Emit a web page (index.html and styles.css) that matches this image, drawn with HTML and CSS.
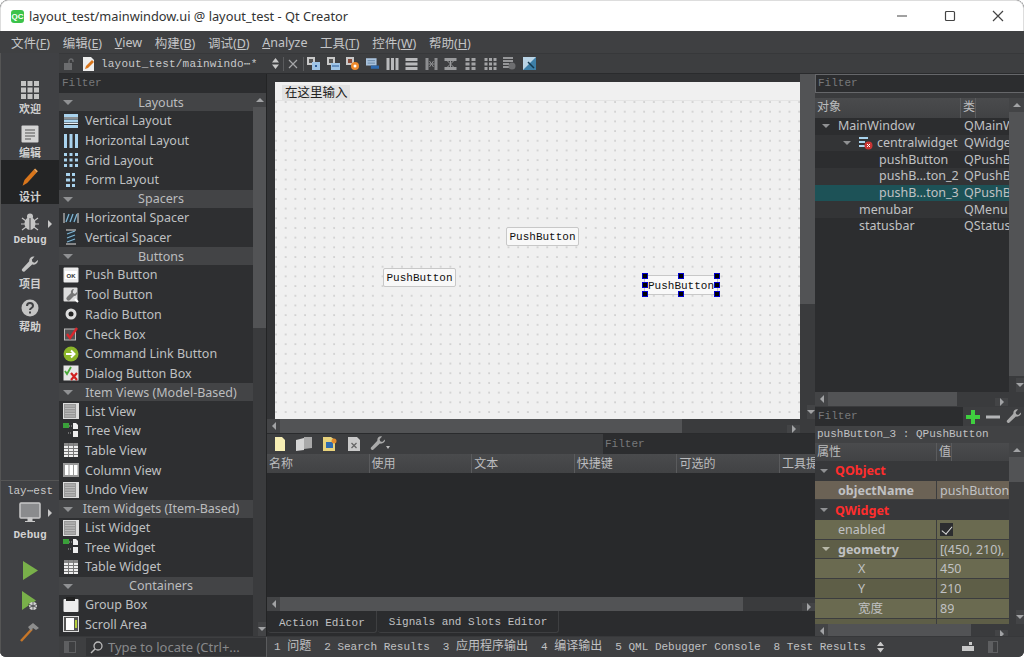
FILE: index.html
```html
<!DOCTYPE html>
<html lang="zh">
<head>
  <meta charset="UTF-8" />
  <title>layout_test/mainwindow.ui @ layout_test - Qt Creator</title>
  <link rel="stylesheet" href="styles.css">
</head>
<body>

  <!-- shared icons -->
  <svg class="defs" width="0" height="0">
    <symbol id="i-vlayout" viewBox="0 0 16 16"><rect x="1" y="1" width="14" height="3" fill="#a9d3ee"/><rect x="1" y="6.500" width="14" height="3" fill="#a9d3ee"/><rect x="1" y="12" width="14" height="3" fill="#a9d3ee"/><path d="M1 5h14M1 10.500h14" stroke="#e8f0f5"/></symbol>
    <symbol id="i-hlayout" viewBox="0 0 16 16"><rect x="1" y="1" width="3" height="14" fill="#a9d3ee"/><rect x="6.500" y="1" width="3" height="14" fill="#a9d3ee"/><rect x="12" y="1" width="3" height="14" fill="#a9d3ee"/></symbol>
    <symbol id="i-grid" viewBox="0 0 16 16"><path d="M1 1h3v3H1zM6.500 1h3v3h-3zM12 1h3v3h-3zM1 6.500h3v3H1zM6.500 6.500h3v3h-3zM12 6.500h3v3h-3zM1 12h3v3H1zM6.500 12h3v3h-3zM12 12h3v3h-3z" fill="#a9d3ee"/></symbol>
    <symbol id="i-form" viewBox="0 0 16 16"><path d="M3 1h4v3H3zM9 1h3v3H9zM3 6.500h4v3H3zM9 6.500h3v3H9zM3 12h4v3H3zM9 12h3v3H9z" fill="#a9d3ee"/></symbol>
    <symbol id="i-hspacer" viewBox="0 0 16 16"><path d="M1 3v10M15 3v10" stroke="#ddd"/><rect x="2" y="4" width="12" height="8" fill="#26323a"/><path d="M3 12l3-8M7 12l3-8M11 12l3-8" stroke="#7fb2d0" stroke-width="1.300"/></symbol>
    <symbol id="i-vspacer" viewBox="0 0 16 16"><path d="M3 1h10M3 15h10" stroke="#ddd"/><rect x="4" y="2" width="8" height="12" fill="#26323a"/><path d="M4 5l8-3M4 9l8-3M4 13l8-3" stroke="#7fb2d0" stroke-width="1.300"/></symbol>
    <symbol id="i-push" viewBox="0 0 16 16"><rect x=".5" y=".5" width="15" height="15" rx="1" fill="#ececec"/><rect x="2" y="4" width="12" height="8" fill="#fff"/><text x="8" y="10.500" font-family="Liberation Sans" font-size="6" font-weight="700" text-anchor="middle" fill="#333">OK</text></symbol>
    <symbol id="i-tool" viewBox="0 0 16 16"><rect x=".5" y=".5" width="14" height="14" rx="1" fill="#ddd"/><path d="M11 2a3 3 0 0 0-3 4L4 10a2 2 0 0 0 3 3l4-4a3 3 0 0 0 3-4l-2 2-2-1V4z" fill="#777"/><path d="M12 12l3 3" stroke="#fff" stroke-width="2"/></symbol>
    <symbol id="i-radio" viewBox="0 0 16 16"><circle cx="8" cy="8" r="5.500" fill="#ddd"/><circle cx="8" cy="8" r="2.500" fill="#222"/></symbol>
    <symbol id="i-check" viewBox="0 0 16 16"><rect x="1.500" y="3" width="11" height="11" fill="#555" stroke="#bbb"/><path d="M4 8l3 4 7-10" fill="none" stroke="#d8262c" stroke-width="2.400"/></symbol>
    <symbol id="i-cmd" viewBox="0 0 16 16"><circle cx="8" cy="8" r="7.500" fill="#8bb52a"/><path d="M3 8h8M8 4.500L11.500 8 8 11.500" fill="none" stroke="#fff" stroke-width="2"/></symbol>
    <symbol id="i-dialog" viewBox="0 0 16 16"><rect x=".5" y=".5" width="15" height="15" fill="#e6e6e6"/><path d="M2 6l2 3 4-7" fill="none" stroke="#4aa83a" stroke-width="1.800"/><path d="M8 8l6 7M14 8l-6 7" stroke="#d02020" stroke-width="2.200"/></symbol>
    <symbol id="i-list" viewBox="0 0 16 16"><rect x="0" y="0" width="16" height="16" fill="#ddd"/><rect x="1" y="1" width="12" height="14" fill="#999"/><path d="M2 3h10M2 5.500h10M2 8h10M2 10.500h10M2 13h10" stroke="#bbb"/></symbol>
    <symbol id="i-tree" viewBox="0 0 16 16"><rect x="0" y="0" width="6" height="5" fill="#3aa03a"/><path d="M6 3h3M5 10h4" stroke="#aaa" stroke-dasharray="1 1"/><path d="M10 0h3l2 2v4h-5zM10 8h5v6h-5z" fill="#eee"/></symbol>
    <symbol id="i-table" viewBox="0 0 16 16"><rect x="1" y="1" width="14" height="14" fill="#eee"/><path d="M1 1h14v3H1z" fill="#888"/><path d="M1 6.500h14M1 9.500h14M1 12.500h14M5.500 1v14M10.500 1v14" stroke="#777"/></symbol>
    <symbol id="i-column" viewBox="0 0 16 16"><rect x="0" y="1" width="16" height="14" fill="#999"/><rect x="2" y="3" width="3.500" height="10" fill="#fff"/><rect x="6.500" y="3" width="3.500" height="10" fill="#fff"/><rect x="11" y="3" width="3.500" height="10" fill="#fff"/></symbol>
    <symbol id="i-groupbox" viewBox="0 0 16 16"><rect x=".5" y="2" width="15" height="13" rx="1" fill="#ececec"/><rect x="3" y="0" width="9" height="4" fill="#222"/></symbol>
    <symbol id="i-scroll" viewBox="0 0 16 16"><rect x=".5" y=".5" width="15" height="15" fill="#555" stroke="#ddd"/><rect x="3" y="2" width="8" height="12" fill="#fff"/><rect x="12" y="4" width="2" height="8" fill="#b5cf3c"/></symbol>
    <symbol id="i-wrench" viewBox="0 0 16 16"><path d="M15 3.500l-2.800 2.400-2-.6-.6-2L12 .5C9.500-.2 7 1.800 7.300 4.700L1 11.500c-1 1.200.8 3.300 2.200 2.200l6.700-6.100c3 .5 5.600-1.600 5.100-4.100z" fill="#aaa"/></symbol>
  </svg>

  <div class="window">

    <header class="titlebar">
      <span class="qc-logo">QC</span>
      <span class="title-text">layout_test/mainwindow.ui @ layout_test - Qt Creator</span>
      <div class="win-buttons">
        <svg width="14" height="14" viewBox="0 0 14 14"><path d="M2 7h10" stroke="#444" stroke-width="1.200"/></svg>
        <svg width="14" height="14" viewBox="0 0 14 14"><rect x="2.500" y="2.500" width="9" height="9" rx="1" fill="none" stroke="#444" stroke-width="1.200"/></svg>
        <svg width="14" height="14" viewBox="0 0 14 14"><path d="M2 2l10 10M12 2L2 12" stroke="#444" stroke-width="1.200"/></svg>
      </div>
    </header>

    <nav class="menubar">
      <span>文件(<u>F</u>)</span>
      <span>编辑(<u>E</u>)</span>
      <span><u>V</u>iew</span>
      <span>构建(<u>B</u>)</span>
      <span>调试(<u>D</u>)</span>
      <span><u>A</u>nalyze</span>
      <span>工具(<u>T</u>)</span>
      <span>控件(<u>W</u>)</span>
      <span>帮助(<u>H</u>)</span>
    </nav>

    <div class="main">

      <!-- Mode selector -->
      <aside class="modebar">
        <div class="mode">
          <svg width="18" height="18" viewBox="0 0 18 18"><path d="M0 0h5v5H0zM6.500 0h5v5h-5zM13 0h5v5h-5zM0 6.500h5v5H0zM6.500 6.500h5v5h-5zM13 6.500h5v5h-5zM0 13h5v5H0zM6.500 13h5v5h-5zM13 13h5v5h-5z" fill="#c4c4c4"/></svg>
          <span>欢迎</span>
        </div>
        <div class="mode">
          <svg width="18" height="18" viewBox="0 0 18 18"><rect width="17" height="17" x=".5" y=".5" rx="1" fill="#d4d4d4"/><path d="M4 5h10M4 8h10M4 11h10M4 14h6" stroke="#555" stroke-width="1.200"/></svg>
          <span>编辑</span>
        </div>
        <div class="mode active">
          <svg width="18" height="20" viewBox="0 0 18 20"><path d="M1 19l2-6L13 2l3 3L6 16z" fill="#d9761c"/><path d="M13 2l1.500-1.500 3 3L16 5z" fill="#e9a35a"/></svg>
          <span>设计</span>
        </div>
        <div class="mode">
          <div class="mode-row">
            <svg width="18" height="18" viewBox="0 0 18 18"><ellipse cx="9" cy="10.500" rx="5.500" ry="6.500" fill="#c4c4c4"/><circle cx="9" cy="3.500" r="3" fill="#c4c4c4"/><path d="M1 5l4 3M17 5l-4 3M0 11h4M18 11h-4M1 17l4-3M17 17l-4-3" stroke="#c4c4c4" stroke-width="1.200"/><path d="M9 5v12" stroke="#404144"/></svg>
            <i class="tri-r"></i>
          </div>
          <span class="mono-label">Debug</span>
        </div>
        <div class="mode">
          <svg width="18" height="18" viewBox="0 0 16 16"><path d="M15 3.500l-2.800 2.400-2-.6-.6-2L12 .5C9.500-.2 7 1.800 7.300 4.700L1 11.500c-1 1.200.8 3.300 2.200 2.200l6.700-6.100c3 .5 5.600-1.600 5.100-4.100z" fill="#c4c4c4"/></svg>
          <span>项目</span>
        </div>
        <div class="mode">
          <svg width="18" height="18" viewBox="0 0 18 18"><circle cx="9" cy="9" r="8.500" fill="#c4c4c4"/><path d="M6 7c0-4 6-4 6 0 0 2-3 2-3 4" fill="none" stroke="#404144" stroke-width="2"/><rect x="8" y="12.500" width="2" height="2" fill="#404144"/></svg>
          <span>帮助</span>
        </div>

        <div class="kit">
          <span class="kit-name">lay⋯est</span>
          <div class="mode-row">
            <svg width="22" height="22" viewBox="0 0 22 22"><rect x="1" y="1" width="20" height="15" rx="1" fill="#8a8b8d" stroke="#c8c8c8" stroke-width="1.500"/><path d="M9 16h4v3H9zM6 19.500h10" fill="#c8c8c8" stroke="#c8c8c8"/></svg>
            <i class="tri-r"></i>
          </div>
          <span class="mono-label">Debug</span>
        </div>
        <div class="run-buttons">
          <svg width="16" height="19" viewBox="0 0 16 19"><path d="M1 0l15 9.500L1 19z" fill="#79b04a"/></svg>
          <svg width="18" height="20" viewBox="0 0 18 20"><path d="M1 0l14 9.500L1 19z" fill="#79b04a"/><ellipse cx="12" cy="15" rx="4" ry="4" fill="#d4d4d4"/><path d="M12 11v8M7 13l10 4M17 13L7 17" stroke="#404144" stroke-width=".8"/></svg>
          <svg width="20" height="20" viewBox="0 0 20 20"><path d="M1 19L12 7" stroke="#c77628" stroke-width="2.500"/><path d="M8 5l5-4 6 5-3 2-3-2-2 3z" fill="#8d8d8d"/></svg>
        </div>
      </aside>

      <div class="content">

        <!-- Document toolbar -->
        <div class="doc-toolbar">
          <svg class="lock" width="12" height="12" viewBox="0 0 12 12"><rect x="1" y="5" width="8" height="7" fill="#6c6d6f"/><path d="M6 5V3a2 2 0 0 1 4 0v1" fill="none" stroke="#6c6d6f" stroke-width="1.300"/></svg>
          <svg class="doc" width="13" height="14" viewBox="0 0 13 14"><path d="M1 0h8l3 3v11H1z" fill="#eee"/><path d="M3 12l1-3 6-6 2 2-6 6z" fill="#d9761c"/></svg>
          <span class="doc-name">layout_test/mainwindo⋯*</span>
          <i class="updown"></i>
          <i class="sep"></i>
          <svg class="close" width="10" height="10" viewBox="0 0 10 10"><path d="M1 1l8 8M9 1L1 9" stroke="#a5a6a8" stroke-width="1.200"/></svg>
          <i class="sep"></i>
          <div class="form-tools">
            <svg width="13" height="13" viewBox="0 0 13 13"><rect width="8" height="8" fill="#c8c8c8"/><rect x="2" y="2" width="4" height="4" fill="#555"/><rect x="5" y="5" width="8" height="8" fill="#9fc4e6"/><rect x="8" y="8" width="2" height="2" fill="#2d5c9a"/></svg>
            <svg width="13" height="13" viewBox="0 0 13 13"><rect width="8" height="8" fill="#c8c8c8"/><rect x="2" y="2" width="4" height="4" fill="#555"/><rect x="4" y="6" width="9" height="7" fill="#9fc4e6"/><path d="M5 9h7" stroke="#2d5c9a"/></svg>
            <svg width="13" height="13" viewBox="0 0 13 13"><rect width="8" height="8" fill="#c8c8c8"/><rect x="2" y="2" width="4" height="4" fill="#8a4b3a"/><circle cx="9" cy="9" r="4" fill="#f08a2c"/><circle cx="9" cy="9" r="1.500" fill="#fff"/></svg>
            <svg width="13" height="13" viewBox="0 0 16 13"><rect width="13" height="9" fill="#a9c2dc"/><path d="M2 3h9M2 6h9" stroke="#5c7c9c"/><rect x="6" y="9" width="10" height="4" fill="#2f6bb0"/></svg>
            <svg width="13" height="12" viewBox="0 0 12 12"><path d="M0 0h3v12H0zM4.500 0h3v12h-3zM9 0h3v12H9z" fill="#b9babc"/></svg>
            <svg width="13" height="12" viewBox="0 0 12 12"><path d="M0 0h12v3H0zM0 4.500h12v3H0zM0 9h12v3H0z" fill="#b9babc"/></svg>
            <svg width="13" height="12" viewBox="0 0 12 12"><path d="M0 0h3v12H0zM9 0h3v12H9z" fill="#8d8e90"/><path d="M3 6h6M4 3l4 6M8 3l-4 6" stroke="#8d8e90"/></svg>
            <svg width="13" height="12" viewBox="0 0 12 12"><path d="M0 0h12v3H0zM0 9h12v3H0z" fill="#9a9b9d"/><path d="M6 3v6M3 3l3 3 3-3M3 9l3-3 3 3" stroke="#9a9b9d" fill="none"/></svg>
            <svg width="13" height="12" viewBox="0 0 12 12"><path d="M1 0h4v3H1zM7 0h4v3H7zM1 4.500h4v3H1zM7 4.500h4v3H7zM1 9h4v3H1zM7 9h4v3H7z" fill="#a3a4a6"/></svg>
            <svg width="13" height="12" viewBox="0 0 12 12"><path d="M0 0h3v3H0zM4.500 0h3v3h-3zM9 0h3v3H9zM0 4.500h3v3H0zM4.500 4.500h3v3h-3zM9 4.500h3v3H9zM0 9h3v3H0zM4.500 9h3v3h-3zM9 9h3v3H9z" fill="#a3a4a6"/></svg>
            <svg width="13" height="13" viewBox="0 0 13 13"><path d="M0 1h10M0 4h10M0 7h6M0 10h6" stroke="#b4b5b7" stroke-width="1.400"/><circle cx="9" cy="9" r="3.500" fill="#6d6e70"/></svg>
            <svg width="13" height="13" viewBox="0 0 13 13"><rect width="13" height="13" fill="#3d7fa8"/><path d="M0 0h13L0 13z" fill="#b9d4e6"/><path d="M5 5l6 6" stroke="#12384f" stroke-width="1.500"/></svg>
          </div>
        </div>

        <div class="workspace">

          <!-- Widget box -->
          <section class="widgetbox">
            <div class="filter-line">Filter</div>
            <div class="box-body">
              <div class="box-list">
                <div class="cat"><i class="arrow-d"></i><span>Layouts</span></div>
                <div class="item"><svg><use href="#i-vlayout"/></svg>Vertical Layout</div>
                <div class="item"><svg><use href="#i-hlayout"/></svg>Horizontal Layout</div>
                <div class="item"><svg><use href="#i-grid"/></svg>Grid Layout</div>
                <div class="item"><svg><use href="#i-form"/></svg>Form Layout</div>
                <div class="cat"><i class="arrow-d"></i><span>Spacers</span></div>
                <div class="item"><svg><use href="#i-hspacer"/></svg>Horizontal Spacer</div>
                <div class="item"><svg><use href="#i-vspacer"/></svg>Vertical Spacer</div>
                <div class="cat"><i class="arrow-d"></i><span>Buttons</span></div>
                <div class="item"><svg><use href="#i-push"/></svg>Push Button</div>
                <div class="item"><svg><use href="#i-tool"/></svg>Tool Button</div>
                <div class="item"><svg><use href="#i-radio"/></svg>Radio Button</div>
                <div class="item"><svg><use href="#i-check"/></svg>Check Box</div>
                <div class="item"><svg><use href="#i-cmd"/></svg>Command Link Button</div>
                <div class="item"><svg><use href="#i-dialog"/></svg>Dialog Button Box</div>
                <div class="cat"><i class="arrow-d"></i><span>Item Views (Model-Based)</span></div>
                <div class="item"><svg><use href="#i-list"/></svg>List View</div>
                <div class="item"><svg><use href="#i-tree"/></svg>Tree View</div>
                <div class="item"><svg><use href="#i-table"/></svg>Table View</div>
                <div class="item"><svg><use href="#i-column"/></svg>Column View</div>
                <div class="item"><svg><use href="#i-list"/></svg>Undo View</div>
                <div class="cat"><i class="arrow-d"></i><span>Item Widgets (Item-Based)</span></div>
                <div class="item"><svg><use href="#i-list"/></svg>List Widget</div>
                <div class="item"><svg><use href="#i-tree"/></svg>Tree Widget</div>
                <div class="item"><svg><use href="#i-table"/></svg>Table Widget</div>
                <div class="cat"><i class="arrow-d"></i><span>Containers</span></div>
                <div class="item"><svg><use href="#i-groupbox"/></svg>Group Box</div>
                <div class="item"><svg><use href="#i-scroll"/></svg>Scroll Area</div>
              </div>
              <div class="vscroll">
                <i class="sb-btn up"></i>
                <b class="thumb box-thumb"></b>
                <i class="sb-btn down"></i>
              </div>
            </div>
          </section>

          <!-- Form editor and action editor -->
          <section class="center">
            <div class="form-view">
              <div class="form-pane">
                <div class="form-window">
                  <div class="form-menu"><span>在这里输入</span></div>
                  <div class="form-canvas">
                    <div class="push b1">PushButton</div>
                    <div class="push b2">PushButton</div>
                    <div class="push b3">PushButton
                      <i class="h tl"></i><i class="h tc"></i><i class="h tr"></i>
                      <i class="h ml"></i><i class="h mr"></i>
                      <i class="h bl"></i><i class="h bc"></i><i class="h br"></i>
                    </div>
                  </div>
                </div>
                <div class="vscroll form-vs">
                  <b class="thumb form-thumb"></b>
                  <i class="sb-btn down"></i>
                </div>
              </div>
              <div class="hscroll form-hs">
                <i class="sb-btn left"></i>
                <b class="thumb form-hthumb"></b>
                <i class="sb-btn right"></i>
              </div>
            </div>

            <div class="action-bar">
              <div class="action-tools">
                <svg width="10" height="14" viewBox="0 0 10 14"><path d="M0 0h7l3 3v11H0z" fill="#f6eeb4"/></svg>
                <svg width="16" height="14" viewBox="0 0 16 14"><path d="M0 3l8-2v12l-8 1z" fill="#d4d4d4"/><path d="M8 0h8v11l-8 1z" fill="#a9a9a9"/></svg>
                <svg width="14" height="14" viewBox="0 0 14 14"><path d="M0 0h8l4 3v11H0z" fill="#e8d27c"/><rect x="3" y="5" width="7" height="6" fill="#2f6bb0"/><circle cx="11" cy="4" r="2.500" fill="#e08a2c"/></svg>
                <svg width="12" height="14" viewBox="0 0 12 14"><path d="M0 0h9l3 3v11H0z" fill="#c9c9c9"/><path d="M3.500 6l5 5M8.500 6l-5 5" stroke="#666" stroke-width="1.300"/></svg>
                <svg class="tool-wrench" width="16" height="16"><use href="#i-wrench"/></svg>
                <i class="tiny-d"></i>
              </div>
              <div class="action-filter">Filter</div>
            </div>
            <div class="header action-head">
              <span>名称</span><span>使用</span><span>文本</span><span>快捷键</span><span>可选的</span><span>工具提示</span>
            </div>
            <div class="action-list"></div>
            <div class="hscroll">
              <i class="sb-btn left"></i>
              <b class="thumb action-hthumb"></b>
              <i class="sb-btn right"></i>
            </div>
            <div class="tabs">
              <span class="tab">Action Editor</span>
              <span class="tab current">Signals and Slots Editor</span>
            </div>
          </section>

          <!-- Object inspector and property editor -->
          <section class="inspector">
            <div class="insp-filter">Filter</div>
            <div class="tree-wrap">
              <div class="tree">
                <div class="header tree-head"><span>对象</span><span>类</span></div>
                <div class="tree-row"><span class="c1 lvl0"><i class="arrow-d"></i>MainWindow</span><span class="c2">QMainW</span></div>
                <div class="tree-row alt"><span class="c1 lvl1"><i class="arrow-d"></i><svg class="cw" width="14" height="14" viewBox="0 0 14 14"><path d="M0 1h9v2H0zM0 5h6v2H0zM0 9h6v2H0z" fill="#a9d3ee"/><circle cx="9.500" cy="9.500" r="4" fill="#c93434"/><path d="M8 8l3 3M11 8l-3 3" stroke="#fff"/></svg>centralwidget</span><span class="c2">QWidge</span></div>
                <div class="tree-row"><span class="c1 lvl2">pushButton</span><span class="c2">QPushB</span></div>
                <div class="tree-row alt"><span class="c1 lvl2">pushB...ton_2</span><span class="c2">QPushB</span></div>
                <div class="tree-row selected"><span class="c1 lvl2">pushB...ton_3</span><span class="c2">QPushB</span></div>
                <div class="tree-row alt"><span class="c1 lvl3">menubar</span><span class="c2">QMenu</span></div>
                <div class="tree-row"><span class="c1 lvl3">statusbar</span><span class="c2">QStatus</span></div>
              </div>
              <div class="vscroll tree-vs">
                <i class="sb-btn up"></i>
                <b class="thumb tree-thumb"></b>
                <i class="sb-btn down"></i>
              </div>
            </div>
            <div class="hscroll inner-hs">
              <i class="sb-btn left"></i>
              <b class="thumb tree-hthumb"></b>
              <i class="sb-btn right"></i>
            </div>

            <div class="prop-filter">
              <div class="prop-input">Filter</div>
              <svg width="14" height="14" viewBox="0 0 14 14"><path d="M5 0h4v5h5v4H9v5H5V9H0V5h5z" fill="#3fcf3f"/></svg>
              <svg width="14" height="14" viewBox="0 0 14 14"><rect y="5.500" width="14" height="3" fill="#b4b5b7"/></svg>
              <svg width="16" height="16"><use href="#i-wrench"/></svg>
            </div>
            <div class="prop-title">pushButton_3 : QPushButton</div>
            <div class="prop-wrap">
              <div class="props">
                <div class="header prop-head"><span>属性</span><span>值</span></div>
                <div class="group"><i class="arrow-d"></i>QObject</div>
                <div class="prop brown"><span class="name bold">objectName</span><span class="val">pushButton</span></div>
                <div class="group"><i class="arrow-d"></i>QWidget</div>
                <div class="prop olive"><span class="name">enabled</span><span class="val"><i class="checkbox"></i></span></div>
                <div class="prop olive dark"><span class="name bold"><i class="arrow-d"></i>geometry</span><span class="val">[(450, 210),</span></div>
                <div class="prop olive"><span class="name sub">X</span><span class="val">450</span></div>
                <div class="prop olive dark"><span class="name sub">Y</span><span class="val">210</span></div>
                <div class="prop olive"><span class="name sub">宽度</span><span class="val">89</span></div>
                <div class="prop olive dark"><span class="name"></span><span class="val"></span></div>
              </div>
              <div class="vscroll prop-vs">
                <i class="sb-btn up"></i>
                <b class="thumb prop-thumb"></b>
                <i class="sb-btn down"></i>
              </div>
            </div>
            <div class="hscroll inner-hs">
              <i class="sb-btn left"></i>
              <b class="thumb prop-hthumb"></b>
              <i class="sb-btn right"></i>
            </div>
          </section>
        </div>

        <!-- Output pane buttons -->
        <footer class="statusbar">
          <div class="locator">
            <svg class="side-toggle" width="12" height="12" viewBox="0 0 12 12"><rect x=".5" y=".5" width="11" height="11" fill="none" stroke="#5e5f61"/><rect x="1" y="1" width="4" height="10" fill="#5e5f61"/></svg>
            <div class="locate-input">
              <svg width="13" height="13" viewBox="0 0 13 13"><circle cx="8" cy="5" r="4" fill="none" stroke="#bbb" stroke-width="1.300"/><path d="M5 8l-4 4" stroke="#bbb" stroke-width="1.500"/></svg>
              <span>Type to locate (Ctrl+...</span>
            </div>
          </div>
          <div class="panes">
            <span>1 <span class="cjk">问题</span></span>
            <span>2 Search Results</span>
            <span>3 <span class="cjk">应用程序输出</span></span>
            <span>4 <span class="cjk">编译输出</span></span>
            <span>5 QML Debugger Console</span>
            <span>8 Test Results</span>
          </div>
          <div class="status-icons">
            <i class="updown"></i>
            <svg class="st-a" width="12" height="10" viewBox="0 0 12 10"><rect y="4" width="12" height="5" fill="#c8c8c8"/><rect x="7" y="0" width="3" height="3" fill="#c8c8c8"/></svg>
            <svg width="10" height="12" viewBox="0 0 10 12"><rect x=".5" y=".5" width="9" height="11" fill="none" stroke="#5e5f61"/><rect x="1" y="1" width="4" height="10" fill="#5e5f61"/></svg>
          </div>
        </footer>
      </div>
    </div>
  </div>

</body>
</html>
```

FILE: styles.css
```css
* {
  box-sizing: border-box;
}

body {
  margin: 0;
  background: #fff;
  font-family: "Noto Sans", "Noto Sans CJK SC", sans-serif;
  font-size: 12.500px;
  color: #c0c1c3;
}

.defs {
  position: absolute;
}

i {
  display: block;
  flex: none;
}

.window {
  width: 1024px;
  height: 657px;
  display: flex;
  flex-direction: column;
  overflow: hidden;
  border-radius: 8px 8px 6px 6px;
  background: #3d3e40;
}

/* title bar */
.titlebar {
  height: 31px;
  flex: none;
  display: flex;
  align-items: center;
  background: #fff;
  padding-left: 10px;
  color: #333;
  border: 1px solid #ddd;
  border-bottom: none;
  border-radius: 8px 8px 0 0;
}

.qc-logo {
  width: 13px;
  height: 13px;
  border-radius: 3px;
  background: #3cc34a;
  color: #fff;
  font: 700 8px/13px "Liberation Sans", sans-serif;
  text-align: center;
  margin-right: 5px;
}

.title-text {
  font-size: 12.800px;
}

.win-buttons {
  margin-left: auto;
  margin-right: 18px;
  display: flex;
  gap: 34px;
}

/* menu */
.menubar {
  height: 22px;
  flex: none;
  display: flex;
  align-items: center;
  gap: 12.600px;
  padding-left: 11px;
  background: #3f4042;
  color: #c4c5c7;
}

.main {
  flex: 1;
  display: flex;
  min-height: 0;
}

/* mode bar */
.modebar {
  width: 59px;
  flex: none;
  display: flex;
  flex-direction: column;
  padding-top: 20px;
  background: #404144;
  border-left: 1px solid #555;
}

.mode {
  height: 43.600px;
  flex: none;
  display: flex;
  flex-direction: column;
  align-items: center;
  justify-content: center;
  gap: 3px;
  padding-top: 8px;
  font-size: 11px;
  font-weight: 700;
  line-height: 14px;
  color: #cfcfcf;
}

.mode.active {
  background: #232425;
}

.mode-row {
  position: relative;
  display: flex;
  justify-content: center;
  width: 100%;
}

.tri-r {
  position: absolute;
  right: 7px;
  top: 7px;
  width: 0;
  height: 0;
  border: 4px solid transparent;
  border-right: none;
  border-left-color: #c8c8c8;
}

.mono-label {
  font: 700 11px/12px "Liberation Mono", monospace;
  color: #d2d2d2;
}

.kit {
  margin-top: auto;
  height: 72px;
  border-top: 1px solid #555;
  display: flex;
  flex-direction: column;
  align-items: center;
  padding-top: 4px;
  gap: 5px;
  flex: none;
}

.kit-name {
  font: 11px/12px "Liberation Mono", monospace;
  color: #c8c8c8;
}

.run-buttons {
  height: 105px;
  flex: none;
  display: flex;
  flex-direction: column;
  align-items: center;
  justify-content: space-between;
  padding: 9px 0 15px;
}

.content {
  flex: 1;
  min-width: 0;
  display: flex;
  flex-direction: column;
}

/* document toolbar */
.doc-toolbar {
  height: 20px;
  flex: none;
  display: flex;
  align-items: center;
  background: #3d3e40;
  border-top: 1px solid #37383a;
  padding-left: 4px;
}

.doc {
  margin-left: 7px;
}

.doc-name {
  margin-left: 6px;
  width: 171px;
  font: 11px "Liberation Mono", monospace;
  letter-spacing: .2px;
  white-space: nowrap;
  color: #c8c9cb;
}

.updown {
  width: 7px;
  height: 11px;
  background: #c8c8c8;
  clip-path: polygon(50% 0, 100% 40%, 50% 40%, 50% 60%, 100% 60%, 50% 100%, 0 60%, 50% 60%, 50% 40%, 0 40%);
}

.sep {
  width: 1px;
  height: 14px;
  background: #5a5b5d;
  margin-left: 4px;
}

.close {
  margin-left: 4px;
  margin-right: 1px;
}

.form-tools {
  display: flex;
  align-items: center;
}

.form-tools svg {
  margin: 0 3.300px;
}

.workspace {
  flex: 1;
  min-height: 0;
  display: flex;
  border-top: 1px solid #2a2b2d;
}

/* widget box */
.widgetbox {
  width: 208px;
  flex: none;
  display: flex;
  flex-direction: column;
  background: #2e2f31;
  border-right: 1px solid #232425;
}

.filter-line {
  height: 19px;
  flex: none;
  padding-left: 3px;
  font: 11px/19px "Liberation Mono", monospace;
  color: #77787a;
  background: #2c2d2f;
}

.box-body {
  flex: 1;
  min-height: 0;
  display: flex;
}

.box-list {
  flex: 1;
  overflow: hidden;
}

.cat {
  height: 18px;
  display: flex;
  align-items: center;
  position: relative;
  justify-content: center;
  padding-left: 10px;
  background: #434446;
  color: #bbbcbe;
  line-height: 17px;
  white-space: nowrap;
}

.cat .arrow-d {
  position: absolute;
  left: 4px;
  top: 7px;
}

.item {
  height: 19.700px;
  display: flex;
  align-items: center;
  gap: 6px;
  padding-left: 4px;
  color: #bfc0c2;
  white-space: nowrap;
}

.item svg {
  width: 16px;
  height: 16px;
  flex: none;
}

/* scrollbars */
.vscroll {
  width: 13px;
  flex: none;
  display: flex;
  flex-direction: column;
  background: #3a3b3d;
}

.hscroll {
  height: 14px;
  flex: none;
  display: flex;
  background: #3a3b3d;
}

.thumb {
  display: block;
  background: #525355;
  flex: none;
}

.sb-btn {
  display: flex;
  align-items: center;
  justify-content: center;
  background: #434446;
}

.vscroll .sb-btn {
  height: 14px;
}

.hscroll .sb-btn {
  width: 13px;
}

.sb-btn.down,
.sb-btn.right {
  margin-top: auto;
  margin-left: auto;
}

.sb-btn::after {
  content: "";
  width: 0;
  height: 0;
  border: 4px solid transparent;
}

.sb-btn.up::after {
  border-top: none;
  border-bottom: 4px solid #a2a3a5;
}

.sb-btn.down::after {
  border-bottom: none;
  border-top: 4px solid #a2a3a5;
}

.sb-btn.left::after {
  border-left: none;
  border-right: 4px solid #a2a3a5;
}

.sb-btn.right::after {
  border-right: none;
  border-left: 4px solid #a2a3a5;
}

.arrow-d {
  width: 0;
  height: 0;
  border: 5px solid transparent;
  border-bottom: none;
  border-top: 5px solid #909193;
}

.box-thumb {
  height: 221px;
}

/* center column */
.center {
  flex: 1;
  min-width: 0;
  display: flex;
  flex-direction: column;
  background: #2a2b2d;
}

.form-view {
  height: 359px;
  flex: none;
  display: flex;
  flex-direction: column;
  background: #333436;
}

.form-pane {
  flex: 1;
  min-height: 0;
  display: flex;
  padding: 8px 0 0 8px;
}

.form-window {
  flex: 1;
  min-width: 0;
  display: flex;
  flex-direction: column;
  background: #f0f0f0;
}

.form-menu {
  height: 19px;
  flex: none;
  padding: 3px 0 0 7px;
  border-bottom: 1px solid #e4e4e4;
}

.form-menu span {
  display: block;
  width: 68px;
  height: 15px;
  background: #e2e2e2;
  color: #222;
  font-size: 12.500px;
  line-height: 15px;
  padding-left: 3px;
}

.form-canvas {
  flex: 1;
  position: relative;
  background-image: radial-gradient(circle at 1px 1px, #cdcdcd .6px, transparent 1px);
  background-size: 9.700px 9.700px;
}

.push {
  position: absolute;
  height: 19px;
  width: 73px;
  background: #f8f8f8;
  border: 1px solid #c8c8c8;
  border-radius: 2px;
  color: #111;
  font: 11px/19px "Liberation Mono", monospace;
  text-align: center;
}

.b1 {
  left: 108px;
  top: 167px;
}

.b2 {
  left: 231px;
  top: 126px;
}

.b3 {
  left: 369px;
  top: 174px;
  width: 74px;
  height: 20px;
  border-radius: 0;
  line-height: 20px;
}

/* selection handles */
.h {
  position: absolute;
  width: 6px;
  height: 6px;
  background: #000;
  border: 1px solid #0000d0;
}

.tl, .tc, .tr { top: -3px; }
.ml, .mr { top: 6px; }
.bl, .bc, .br { bottom: -3px; }
.tl, .ml, .bl { left: -3px; }
.tc, .bc { left: 33px; }
.tr, .mr, .br { right: -3px; }

.form-vs {
  width: 15px;
  margin-top: -8px;
}

.form-thumb {
  height: 230px;
}

.form-hs {
  padding-right: 15px;
}

.form-hthumb {
  width: 402px;
}

.action-bar {
  height: 21px;
  flex: none;
  display: flex;
  background: #3d3e40;
  border-top: 1px solid #2a2b2d;
}

.action-tools {
  flex: 1;
  display: flex;
  align-items: center;
  gap: 11px;
  padding-left: 8px;
}

.tool-wrench {
  margin-left: -1px;
}

.tiny-d {
  width: 0;
  height: 0;
  border: 2px solid transparent;
  border-top: 3px solid #bbb;
  border-bottom: none;
  margin: 6px 0 0 -11px;
}

.action-filter {
  width: 212px;
  background: #2c2d2f;
  padding-left: 2px;
  font: 11px/21px "Liberation Mono", monospace;
  color: #77787a;
}

.header {
  display: flex;
  flex: none;
  background: linear-gradient(#4a4b4d, #414244);
  color: #bbbcbe;
  font-size: 12px;
}

.header span {
  border-right: 1px solid #5a5b5d;
  padding-left: 2px;
  overflow: hidden;
  white-space: nowrap;
}

.action-head {
  height: 19px;
  line-height: 19px;
}

.action-head span {
  width: 102.600px;
  flex: none;
}

.action-list {
  flex: 1;
  min-height: 0;
  background: #28292b;
}

.action-hthumb {
  width: 463px;
}

.tabs {
  height: 25px;
  flex: none;
  display: flex;
  gap: 1px;
  align-items: flex-start;
  padding-left: 1px;
  background: #2b2c2e;
  font: 11px/23px "Liberation Mono", monospace;
  color: #c0c1c3;
}

.tab {
  height: 22px;
  padding: 1px 11px 0;
  border-right: 1px solid #3e3f41;
  border-bottom: 1px solid #3e3f41;
  border-radius: 0 0 3px 3px;
}

.tab.current {
  padding: 0 11px;
}

/* right column */
.inspector {
  width: 209px;
  flex: none;
  display: flex;
  flex-direction: column;
  background: #3a3b3d;
  overflow: hidden;
}

.insp-filter {
  height: 19px;
  flex: none;
  margin-bottom: 5px;
  padding-left: 2px;
  border: 1px solid #66676a;
  border-right: none;
  background: #2c2d2f;
  font: 11px/17px "Liberation Mono", monospace;
  color: #77787a;
}

.tree-wrap {
  flex: none;
  height: 294px;
  display: flex;
  background: #2c2d2f;
}

.tree {
  flex: 1;
  min-width: 0;
  overflow: hidden;
}

.tree-vs,
.prop-vs {
  width: 15px;
}

.tree-head {
  height: 20px;
  line-height: 18px;
}

.tree-head span:first-child {
  width: 146px;
}

.tree-row {
  height: 16.700px;
  display: flex;
  align-items: center;
  line-height: 16px;
  background: #2c2d2f;
  white-space: nowrap;
}

.tree-row.alt {
  background: #333436;
}

.tree-row.selected {
  background: #1d5257;
}

.c1 {
  width: 146px;
  flex: none;
  display: flex;
  align-items: center;
  position: relative;
}

.c2 {
  padding-left: 3px;
  overflow: hidden;
}

.c1 .arrow-d {
  border-width: 4px;
  border-bottom: none;
  margin-right: 8px;
}

.lvl0 {
  padding-left: 7px;
}

.lvl1 {
  padding-left: 28px;
}

.cw {
  margin-right: 4px;
}

.lvl2 {
  padding-left: 64px;
}

.lvl3 {
  padding-left: 44px;
}

.tree-thumb {
  height: 264px;
}

.inner-hs {
  padding-right: 16px;
}

.tree-hthumb {
  width: 129px;
}

.prop-filter {
  height: 19px;
  flex: none;
  display: flex;
  align-items: center;
  gap: 3px;
  background: #3d3e40;
  margin-top: 1px;
}

.prop-filter svg {
  flex: none;
}

.prop-filter svg + svg {
  margin-left: 3px;
}

.prop-input {
  width: 148px;
  height: 19px;
  flex: none;
  padding-left: 3px;
  background: #2c2d2f;
  font: 11px/19px "Liberation Mono", monospace;
  color: #77787a;
}

.prop-title {
  height: 17px;
  flex: none;
  padding-left: 2px;
  font: 11px/17px "Liberation Mono", monospace;
  color: #c0c1c3;
  background: #414244;
}

.prop-wrap {
  flex: none;
  height: 181px;
  display: flex;
}

.props {
  flex: 1;
  min-width: 0;
  overflow: hidden;
  background: #2c2d2f;
}

.prop-head {
  height: 18px;
  line-height: 18px;
}

.prop-head span:first-child {
  width: 122px;
}

.group {
  height: 19.700px;
  display: flex;
  align-items: center;
  padding-left: 5px;
  background: #37383a;
  color: #ff2d2d;
  font-weight: 700;
}

.group .arrow-d {
  border-width: 4px;
  border-bottom: none;
  margin-right: 7px;
}

.prop {
  height: 19.700px;
  display: flex;
  line-height: 19px;
  border-bottom: 1px solid #3c3d3f;
}

.prop.brown {
  background: #6b6255;
}

.prop.olive {
  background: #6a6a50;
}

.prop.olive.dark {
  background: #5e5e47;
}

.name {
  width: 122px;
  flex: none;
  padding-left: 23px;
  border-right: 1px solid #3c3d3f;
  display: flex;
  align-items: center;
  position: relative;
}

.name .arrow-d {
  position: absolute;
  left: 7px;
  border-width: 4px;
  border-bottom: none;
  border-top-color: #b8b8a8;
}

.name.sub {
  padding-left: 43px;
}

.bold {
  font-weight: 700;
}

.val {
  padding-left: 3px;
  white-space: nowrap;
  overflow: hidden;
}

.checkbox {
  width: 13px;
  height: 13px;
  margin-top: 3px;
  background: #2c2d2f;
  position: relative;
}

.checkbox::after {
  content: "";
  position: absolute;
  left: 4px;
  top: 1px;
  width: 5px;
  height: 9px;
  border: solid #ddd;
  border-width: 0 1.500px 1.500px 0;
  transform: rotate(40deg);
}

.prop-thumb {
  height: 25px;
}

.prop-hthumb {
  width: 143px;
}

/* bottom bar */
.statusbar {
  height: 21px;
  flex: none;
  display: flex;
  align-items: center;
  background: #3e3f41;
  border-top: 1px solid #37383a;
}

.locator {
  width: 208px;
  height: 100%;
  flex: none;
  display: flex;
  align-items: center;
  padding-left: 5px;
  gap: 10px;
  border-right: 1px solid #5a5b5d;
}

.locate-input {
  flex: 1;
  height: 18px;
  display: flex;
  align-items: center;
  gap: 5px;
  padding-left: 4px;
  background: #333436;
  font-size: 13px;
  color: #88898b;
}

.panes {
  display: flex;
  gap: 13px;
  padding-left: 7px;
  font: 11px/16px "Liberation Mono", "Noto Sans CJK SC", monospace;
  color: #c0c1c3;
  white-space: nowrap;
}

.cjk {
  font-size: 12px;
  line-height: 14px;
}

.status-icons {
  margin-left: auto;
  display: flex;
  align-items: center;
  padding-right: 26px;
}

.st-a {
  margin-left: 78px;
  margin-right: 14px;
}
```
